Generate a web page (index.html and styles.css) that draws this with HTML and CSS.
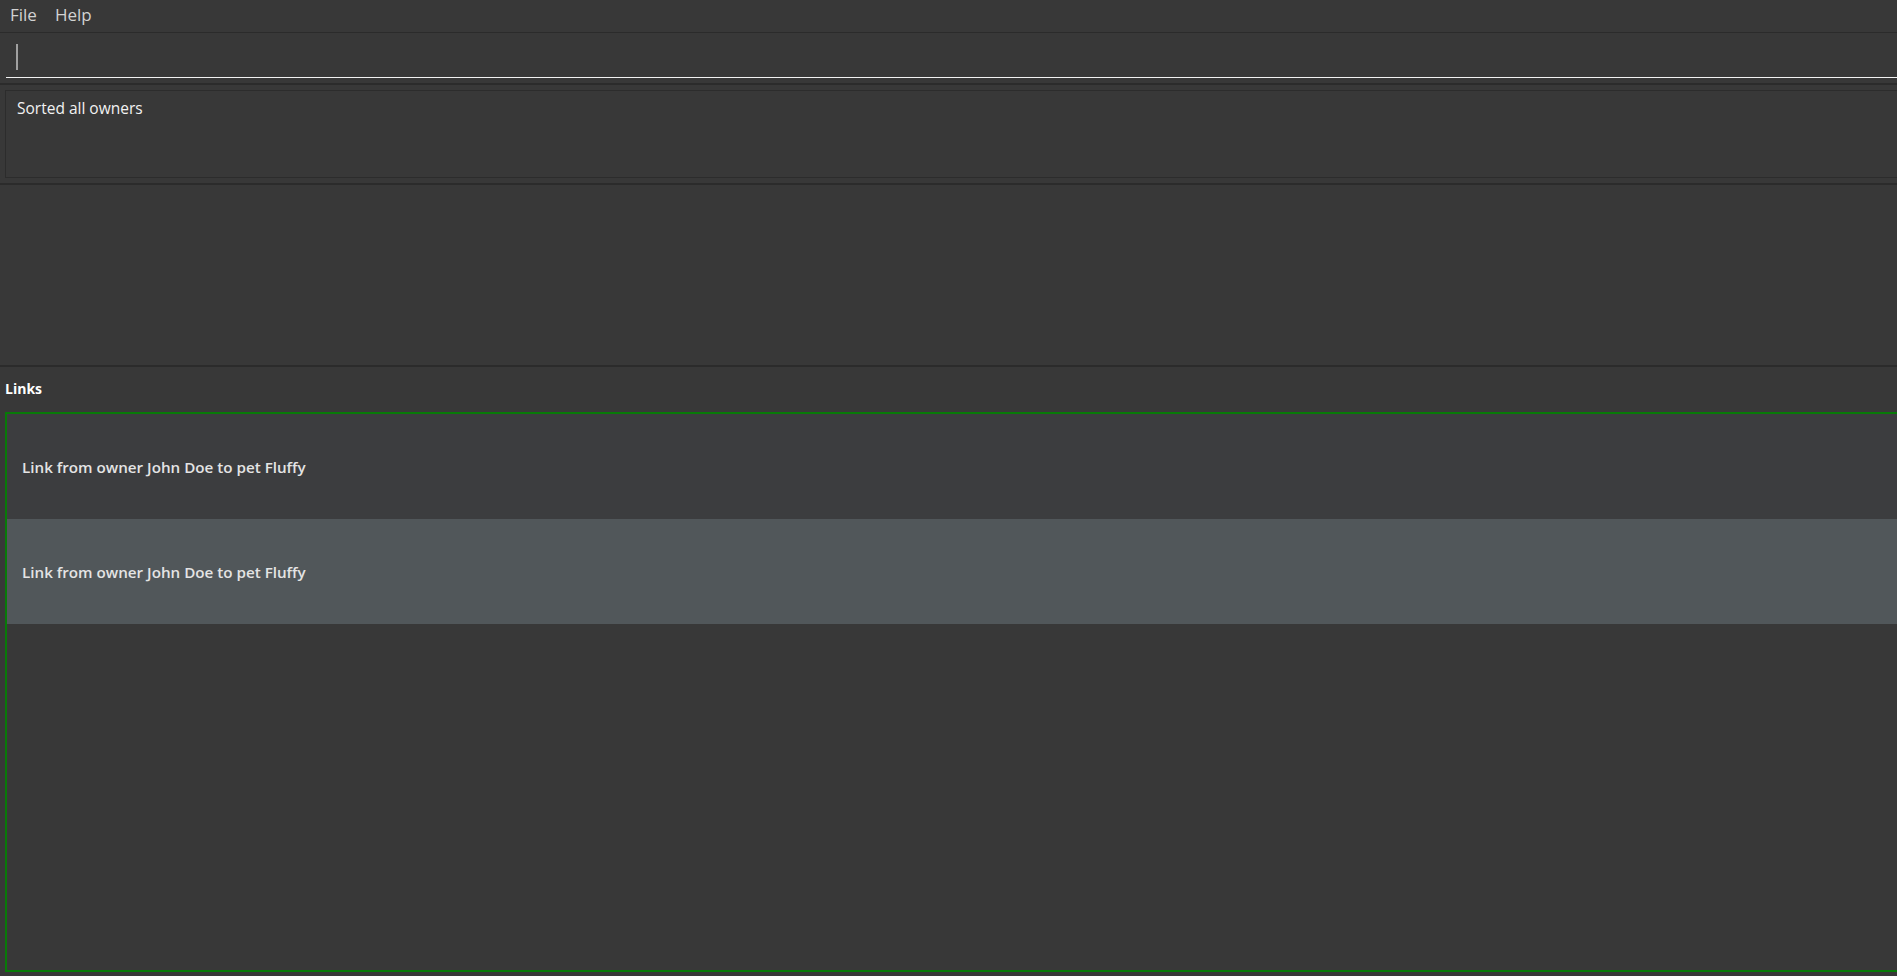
FILE: index.html
```html
<!DOCTYPE html>
<html lang="en">
<head>
<meta charset="utf-8">
<title>Pet Owner App</title>
<link rel="stylesheet" href="styles.css">
</head>
<body>
<div class="app">
  <div class="menubar">
    <span class="menu-item">File</span>
    <span class="menu-item">Help</span>
  </div>
  <div class="command-pane">
    <div class="command-field"><span class="caret"></span></div>
  </div>
  <div class="divider"></div>
  <div class="result-pane">
    <div class="result-box">Sorted all owners</div>
  </div>
  <div class="divider"></div>
  <div class="empty-pane"></div>
  <div class="divider"></div>
  <div class="links-pane">
    <div class="links-label">Links</div>
    <div class="links-list">
      <div class="link-row">Link from owner John Doe to pet Fluffy</div>
      <div class="link-row link-row-alt">Link from owner John Doe to pet Fluffy</div>
    </div>
  </div>
</div>
</body>
</html>
```

FILE: styles.css
```css
html, body {
  margin: 0;
  padding: 0;
  background: #383838;
  overflow: hidden;
  height: 976px;
}

.app {
  width: 1920px;
  height: 976px;
  display: flex;
  flex-direction: column;
  font-family: "Open Sans", "Noto Sans", sans-serif;
  color: #e8e8e8;
}

.menubar {
  height: 32px;
  border-bottom: 1px solid #2b2b2b;
  display: flex;
  align-items: center;
  gap: 18px;
  padding-left: 10px;
  padding-bottom: 3px;
  box-sizing: border-box;
  box-sizing: content-box;
  height: 29px;
  flex: none;
}

.menu-item {
  font-size: 17px;
  color: #d2d2d2;
  line-height: 22px;
}

.command-pane {
  height: 50px;
  flex: none;
  padding: 4px 0 0 6px;
  box-sizing: border-box;
}

.command-field {
  height: 41px;
  border-bottom: 1px solid #f2f2f2;
  box-sizing: border-box;
  display: flex;
  align-items: center;
  padding-left: 10px;
}

.caret {
  display: inline-block;
  width: 2px;
  height: 26px;
  background: #a0a0a0;
}

.divider {
  height: 2px;
  background: #2b2b2b;
  flex: none;
}

.result-pane {
  height: 98px;
  flex: none;
  padding: 5px 0 5px 5px;
  box-sizing: border-box;
}

.result-box {
  height: 88px;
  box-sizing: border-box;
  border: 1px solid #2c2c2c;
  padding: 7px 11px;
  font-size: 15.5px;
  line-height: 20px;
  color: #f2f2f2;
}

.empty-pane {
  height: 180px;
  flex: none;
}

.links-pane {
  flex: 1;
  display: flex;
  flex-direction: column;
  padding: 0 0 4px 5px;
}

.links-label {
  height: 45px;
  box-sizing: border-box;
  padding-top: 12px;
  font-size: 14px;
  font-weight: 700;
  line-height: 20px;
  color: #ffffff;
}

.links-list {
  flex: 1;
  border: 2px solid #087a08;
  display: flex;
  flex-direction: column;
}

.link-row {
  height: 105px;
  display: flex;
  align-items: center;
  padding-left: 15px;
  background: #3c3d3f;
  font-size: 15.2px;
  font-weight: 600;
  color: #e4e4e4;
}

.link-row-alt {
  background: #51575a;
}
```
